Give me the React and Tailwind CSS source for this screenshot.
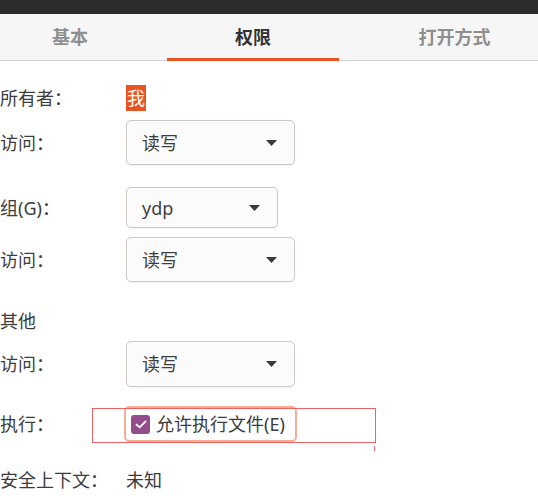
import React from 'react'

const font = { fontFamily: '"Noto Sans", "Noto Sans CJK SC", sans-serif' }

function Arrow() {
  return (
    <svg width="11" height="6" viewBox="0 0 11 6" className="shrink-0">
      <path d="M0 0 L11 0 L5.5 6 Z" fill="#3a3a3a" />
    </svg>
  )
}

function Dropdown({ value, width, height }) {
  return (
    <div
      className={`${width} ${height} flex items-center justify-between pl-[15px] pr-[17px] rounded-[5px] border border-[#cdc8c3] bg-[#fbfbfb] shadow-[0_1px_0_rgba(0,0,0,0.04)] text-[#3d3d3d]`}
    >
      <span>{value}</span>
      <Arrow />
    </div>
  )
}

function Row({ label, className, children }) {
  return (
    <div className={`flex items-center ${className}`}>
      <div className="w-[126px] shrink-0 text-[#3c3c3c]">{label}</div>
      {children}
    </div>
  )
}

export default function App() {
  return (
    <div className="w-[538px] h-[500px] bg-white overflow-hidden text-[18px] leading-none" style={font}>
      <div className="h-[14px] bg-[#2c2c2c]" />

      <div className="flex h-[47px] bg-[#f6f6f6] border-b border-[#d2d2d2]">
        <div className="w-[167px] pr-[27px] flex items-center justify-center text-[#8f8f8f] font-bold">基本</div>
        <div className="relative w-[172px] flex items-center justify-center text-[#333333] font-bold">
          权限
          <div className="absolute left-0 right-0 bottom-[-1px] h-[3px] bg-[#e95420]" />
        </div>
        <div className="flex-1 pl-[32px] flex items-center justify-center text-[#8f8f8f] font-bold">打开方式</div>
      </div>

      <div className="flex flex-col pt-[22px]">
        <Row label="所有者：" className="h-[30px]">
          <span className="px-[1px] py-[4px] bg-[#e95420] text-white">我</span>
        </Row>
        <Row label="访问：" className="mt-[7px] h-[45px]">
          <Dropdown value="读写" width="w-[169px]" height="h-[45px]" />
        </Row>
        <Row label="组(G)：" className="mt-[22px] h-[41px]">
          <Dropdown value="ydp" width="w-[152px]" height="h-[41px]" />
        </Row>
        <Row label="访问：" className="mt-[9px] h-[45px]">
          <Dropdown value="读写" width="w-[169px]" height="h-[45px]" />
        </Row>
        <div className="mt-[24px] h-[30px] flex items-center text-[#3c3c3c]">其他</div>
        <Row label="访问：" className="mt-[5px] h-[46px]">
          <Dropdown value="读写" width="w-[169px]" height="h-[46px]" />
        </Row>
        <Row label="执行：" className="relative mt-[19px] h-[36px]">
          <div className="-ml-[2px] h-[36px] w-[173px] flex items-center gap-[6px] pl-[5px] rounded-[5px] border-2 border-[#f5ae95]">
            <span className="w-[19px] h-[19px] rounded-[3px] bg-[#924d8b] flex items-center justify-center">
              <svg width="12" height="9" viewBox="0 0 12 9">
                <path d="M1.5 4.5 L4.6 7.4 L10.5 1.5" stroke="white" strokeWidth="1.8" fill="none" strokeLinecap="round" strokeLinejoin="round" />
              </svg>
            </span>
            <span className="text-[#3c3c3c] whitespace-nowrap">允许执行文件(E)</span>
          </div>
          <div className="absolute left-[92px] top-[2px] w-[284px] h-[35px] border border-[#f06262]" />
          <div className="absolute left-[374px] top-[40px] w-[1px] h-[5px] bg-[#f06262]" />
        </Row>
        <Row label="安全上下文：" className="mt-[23px] h-[30px]">
          <span className="text-[#3c3c3c]">未知</span>
        </Row>
      </div>
    </div>
  )
}
